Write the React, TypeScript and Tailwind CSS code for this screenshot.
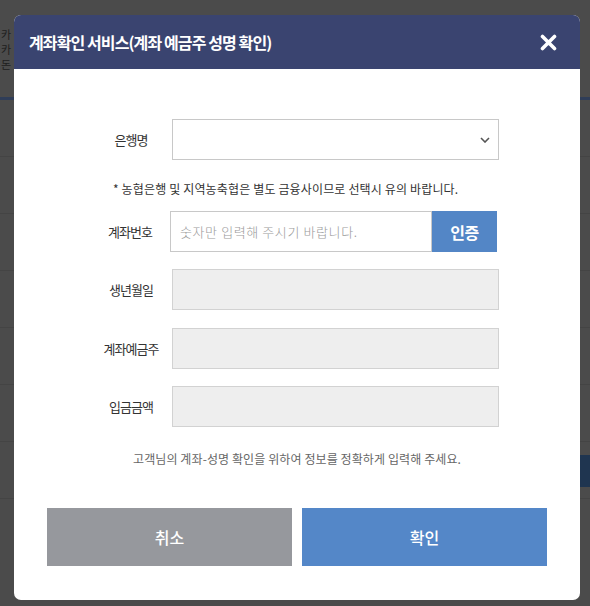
import React from 'react';

const KR = { fontFamily: '"Noto Sans CJK KR", "Noto Sans", sans-serif' };

function FieldRow({ label, children }: { label: string; children: React.ReactNode }) {
  return (
    <div className="flex items-center">
      <div className="w-[82px] text-center text-[13px] tracking-[-1px] text-[#333]">{label}</div>
      {children}
    </div>
  );
}

function ReadonlyBox() {
  return <div className="w-[327px] h-[41px] bg-[#eeeeee] border border-[#d2d2d2]" />;
}

export default function App() {
  return (
    <div className="relative w-[590px] h-[606px] overflow-hidden bg-[#4b4b4b]" style={KR}>
      {/* dimmed page underneath */}
      <div className="flex flex-col pt-[27px] pl-[1px] text-[11px] leading-[15px] text-[#1e1e1e]">
        <span>카</span>
        <span>카</span>
        <span>돈</span>
      </div>
      <div className="mt-[25px] h-[3px] bg-[#2f3d58]" />
      <div className="flex flex-col">
        {[0, 1, 2, 3, 4, 5, 6].map((i) => (
          <div key={i} className="h-[57px] border-b border-[#444]" />
        ))}
      </div>
      <div className="absolute right-0 top-[455px] w-[10px] h-[32px] bg-[#1f3550]" />

      {/* modal */}
      <div className="absolute left-[14px] top-[15px] w-[566px] h-[585px] rounded-[7px] bg-white overflow-hidden flex flex-col">
        <div className="h-[54px] bg-[#3a4470] flex items-center justify-between pl-[15px] pr-[23px]">
          <h1 className="text-white font-bold text-[16px] tracking-[-0.9px]">계좌확인 서비스(계좌 예금주 성명 확인)</h1>
          <svg width="17" height="17" viewBox="0 0 17 17">
            <path d="M2.5 2.5 L14.5 14.5 M14.5 2.5 L2.5 14.5" stroke="white" strokeWidth="3.6" strokeLinecap="round" />
          </svg>
        </div>

        <div className="flex flex-col pl-[76px] pt-[50px]">
          <FieldRow label="은행명">
            <div className="w-[327px] h-[41px] border border-[#c8c8c8] flex items-center justify-end pr-[8px]">
              <svg width="10" height="6" viewBox="0 0 10 6">
                <path d="M1 1 L5 5 L9 1" stroke="#555" strokeWidth="1.6" fill="none" />
              </svg>
            </div>
          </FieldRow>

          <p className="mt-[20px] mb-[14px] ml-[23px] text-[12px] leading-[17px] tracking-[0.15px] text-[#333]">
            * 농협은행 및 지역농축협은 별도 금융사이므로 선택시 유의 바랍니다.
          </p>

          <div className="flex items-center">
            <div className="w-[80px] text-center text-[13px] tracking-[-1px] text-[#333]">계좌번호</div>
            <div className="w-[262px] h-[41px] border border-[#c8c8c8] flex items-center pl-[9px] text-[13px] tracking-[0.6px] font-light text-[#9a9a9a]">
              숫자만 입력해 주시기 바랍니다.
            </div>
            <button className="w-[65px] h-[41px] bg-[#5386c6] text-white font-bold text-[16px] tracking-[-0.5px]">인증</button>
          </div>

          <div className="mt-[17px]">
            <FieldRow label="생년월일"><ReadonlyBox /></FieldRow>
          </div>
          <div className="mt-[18px]">
            <FieldRow label="계좌예금주"><ReadonlyBox /></FieldRow>
          </div>
          <div className="mt-[17px]">
            <FieldRow label="입금금액"><ReadonlyBox /></FieldRow>
          </div>
        </div>

        <p className="mt-[23px] text-center text-[12px] leading-[18px] tracking-[0.1px] text-[#666]">
          고객님의 계좌-성명 확인을 위하여 정보를 정확하게 입력해 주세요.
        </p>

        <div className="mt-[40px] flex gap-[10px] px-[33px]">
          <button className="flex-1 h-[58px] bg-[#96989d] text-white text-[16px] font-medium">취소</button>
          <button className="flex-1 h-[58px] bg-[#5487c8] text-white text-[16px] font-medium">확인</button>
        </div>
      </div>
    </div>
  );
}
